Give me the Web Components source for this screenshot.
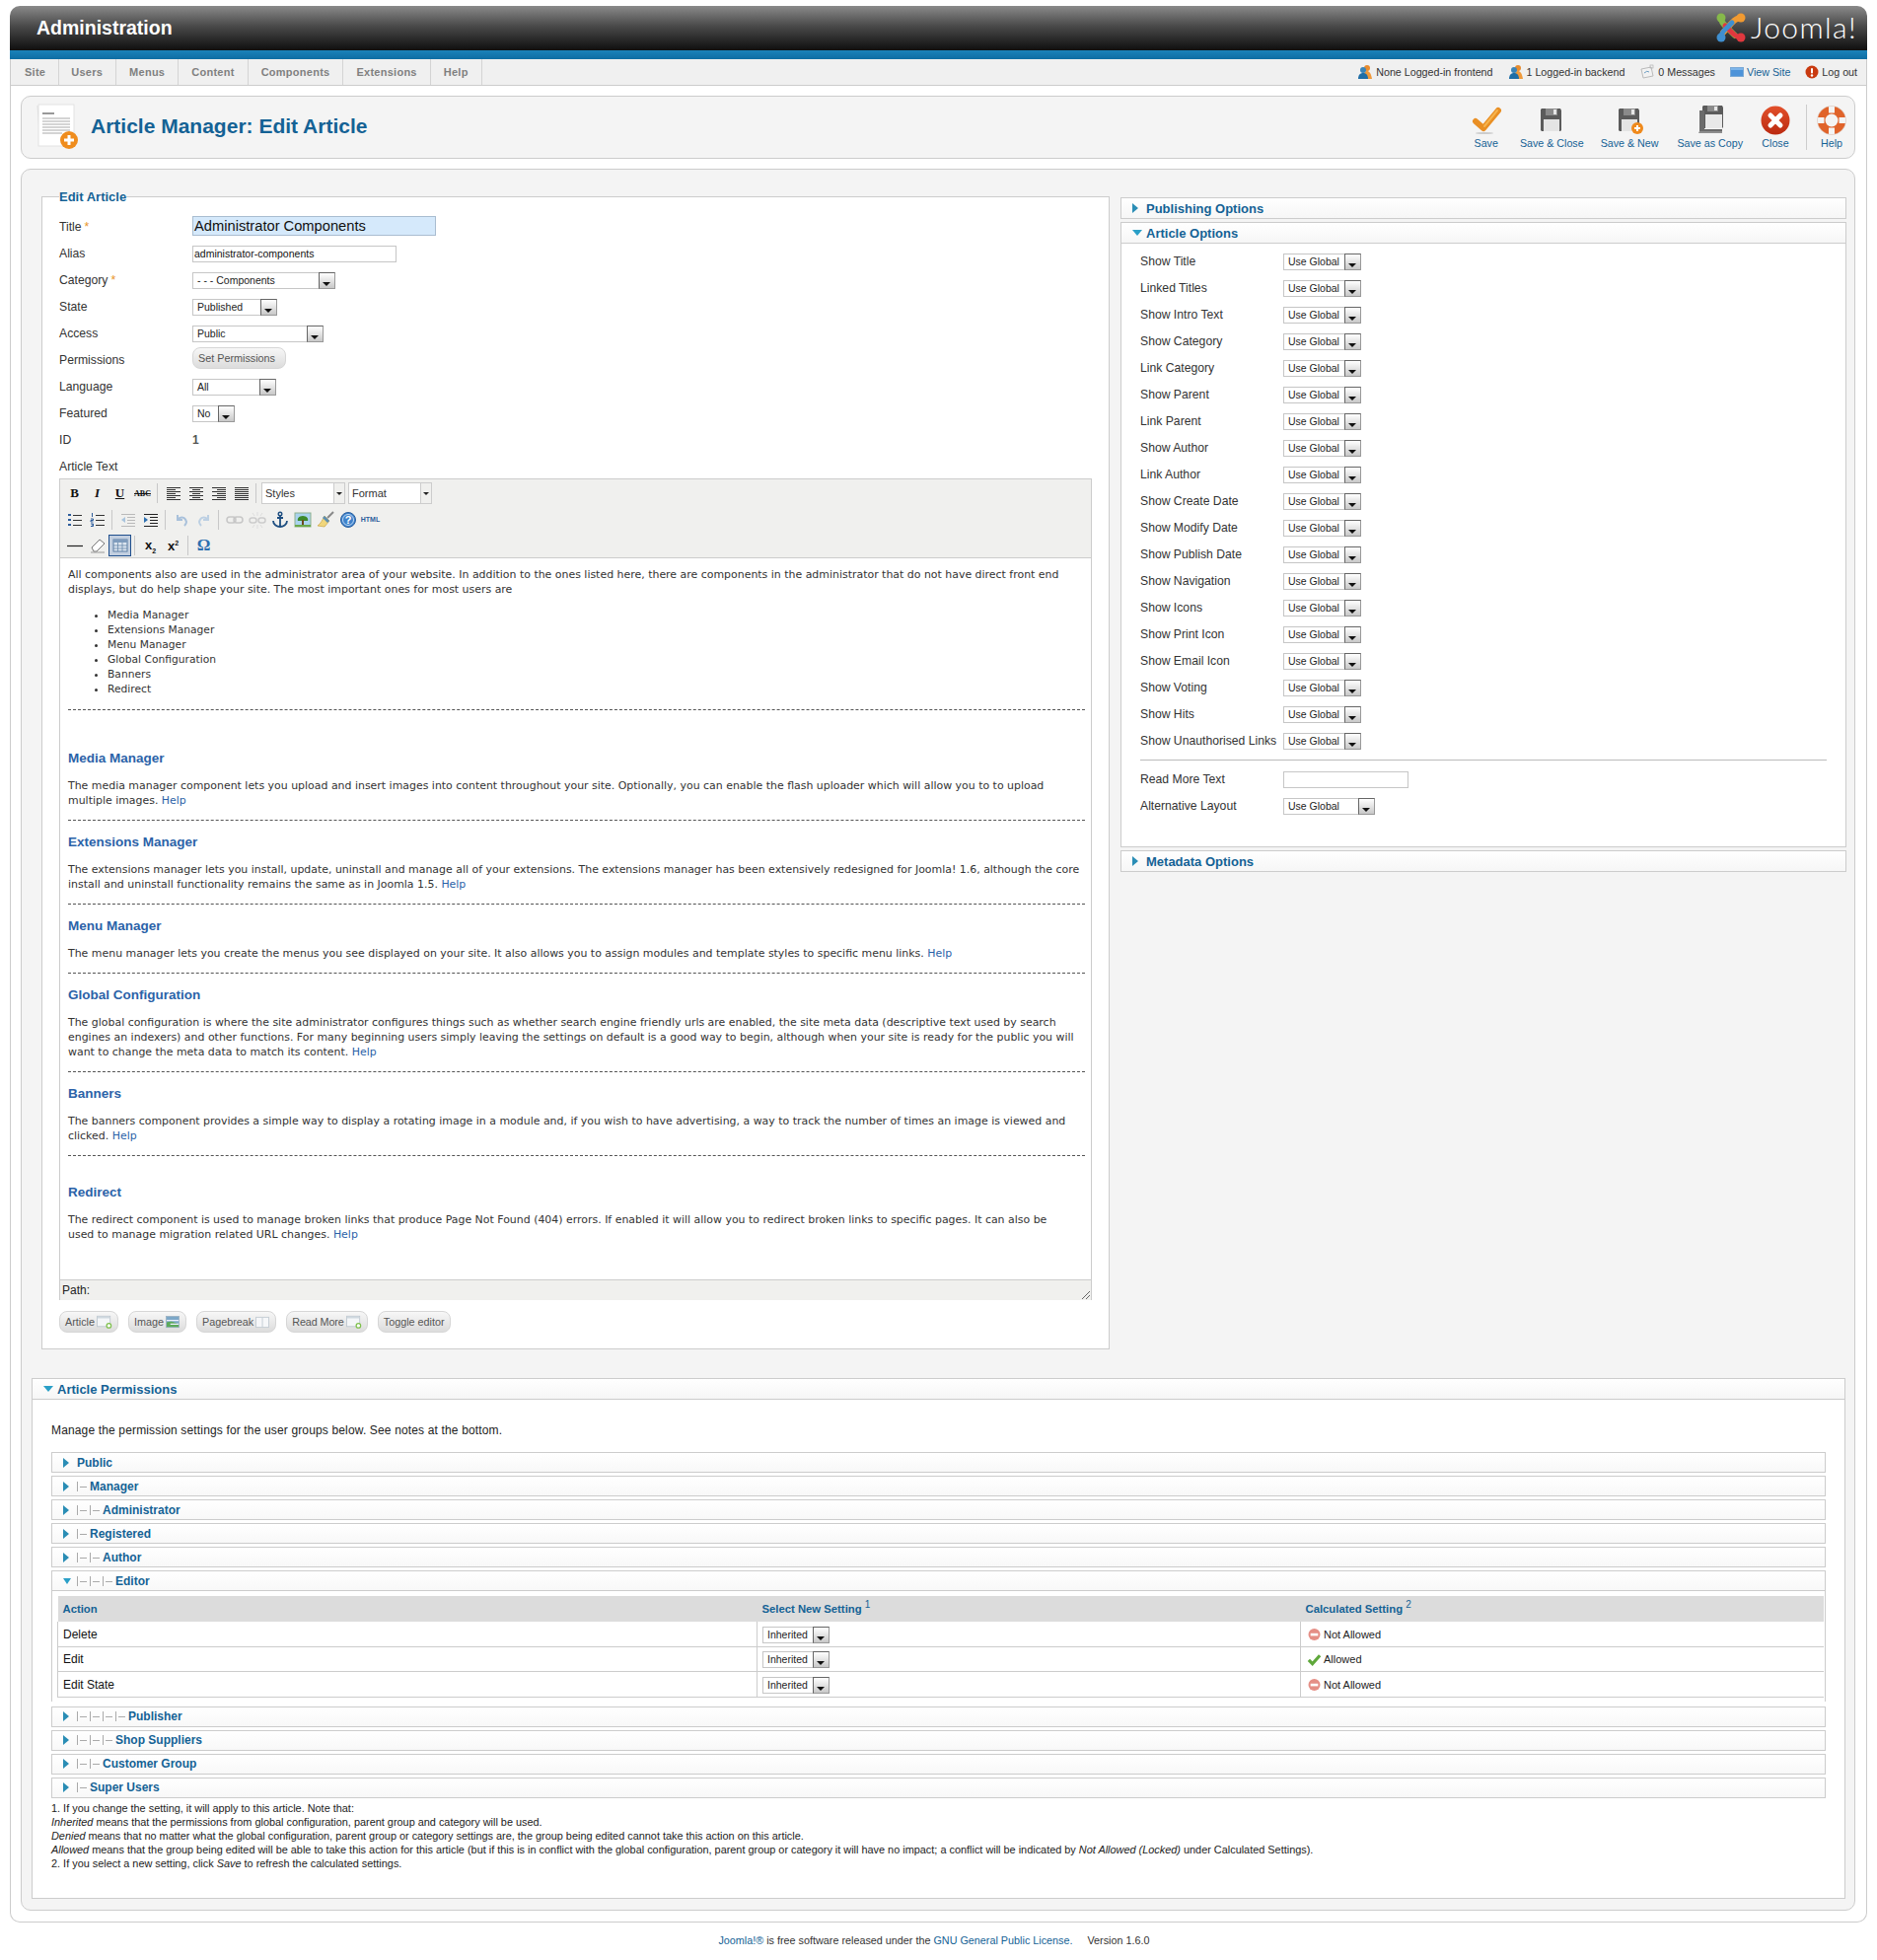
<!DOCTYPE html>
<html lang="en">
<head>
<meta charset="utf-8">
<title>Administration - Edit Article</title>
<style>
  html, body { margin: 0; background: #fff; }
  body { font-family: "Liberation Sans", Arial, sans-serif; color: #333; }
  rich-editor a { color: #2b62a8; }
</style>
</head>
<body>
<admin-page>
  <admin-header heading="Administration"></admin-header>
  <admin-frame>
    <admin-menu></admin-menu>
    <title-bar heading="Article Manager: Edit Article">
      <tool-button label="Save" icon="save" style="padding-right:9.7px"></tool-button>
      <tool-button label="Save &amp; Close" icon="floppy"></tool-button>
      <tool-button label="Save &amp; New" icon="floppyNew"></tool-button>
      <tool-button label="Save as Copy" icon="floppyCopy" style="padding-left:10.5px"></tool-button>
      <tool-button label="Close" icon="close"></tool-button>
      <tool-button label="Help" icon="help" divider></tool-button>
    </title-bar>
    <content-box>
      <edit-fieldset slot="left" legend="Edit Article">
        <form-row label="Title" required><text-input value="Administrator Components" variant="title" width="247"></text-input></form-row>
        <form-row label="Alias"><text-input value="administrator-components" width="207"></text-input></form-row>
        <form-row label="Category" required><fake-select value="- - - Components" width="145"></fake-select></form-row>
        <form-row label="State"><fake-select value="Published" width="86"></fake-select></form-row>
        <form-row label="Access"><fake-select value="Public" width="133"></fake-select></form-row>
        <form-row label="Permissions"><soft-button wide>Set Permissions</soft-button></form-row>
        <form-row label="Language"><fake-select value="All" width="85"></fake-select></form-row>
        <form-row label="Featured"><fake-select value="No" width="43"></fake-select></form-row>
        <form-row label="ID"><b style="color:#555;font-size:12px">1</b></form-row>
        <form-row label="Article Text"></form-row>
        <rich-editor>
          <p>All components also are used in the administrator area of your website. In addition to the ones listed here, there are components in the administrator that do not have direct front end<br>displays, but do help shape your site. The most important ones for most users are</p>
          <ul><li>Media Manager</li><li>Extensions Manager</li><li>Menu Manager</li><li>Global Configuration</li><li>Banners</li><li>Redirect</li></ul>
          <hr>
          <h3 class="far">Media Manager</h3>
          <p>The media manager component lets you upload and insert images into content throughout your site. Optionally, you can enable the flash uploader which will allow you to to upload<br>multiple images. <a>Help</a></p>
          <hr>
          <h3>Extensions Manager</h3>
          <p>The extensions manager lets you install, update, uninstall and manage all of your extensions. The extensions manager has been extensively redesigned for Joomla! 1.6, although the core<br>install and uninstall functionality remains the same as in Joomla 1.5. <a>Help</a></p>
          <hr>
          <h3>Menu Manager</h3>
          <p>The menu manager lets you create the menus you see displayed on your site. It also allows you to assign modules and template styles to specific menu links. <a>Help</a></p>
          <hr>
          <h3>Global Configuration</h3>
          <p>The global configuration is where the site administrator configures things such as whether search engine friendly urls are enabled, the site meta data (descriptive text used by search<br>engines an indexers) and other functions. For many beginning users simply leaving the settings on default is a good way to begin, although when your site is ready for the public you will<br>want to change the meta data to match its content. <a>Help</a></p>
          <hr>
          <h3>Banners</h3>
          <p>The banners component provides a simple way to display a rotating image in a module and, if you wish to have advertising, a way to track the number of times an image is viewed and<br>clicked. <a>Help</a></p>
          <hr>
          <h3 class="mid">Redirect</h3>
          <p>The redirect component is used to manage broken links that produce Page Not Found (404) errors. If enabled it will allow you to redirect broken links to specific pages. It can also be<br>used to manage migration related URL changes. <a>Help</a></p>
        </rich-editor>
        <editor-buttons>
          <soft-button icon="btnArticle">Article</soft-button>
          <soft-button icon="btnImage">Image</soft-button>
          <soft-button icon="btnBreak">Pagebreak</soft-button>
          <soft-button icon="btnArticle" style="letter-spacing:-.1px">Read More</soft-button>
          <soft-button>Toggle editor</soft-button>
        </editor-buttons>
      </edit-fieldset>

      <option-panel slot="right" heading="Publishing Options"></option-panel>
      <option-panel slot="right" heading="Article Options" open>
        <article-options></article-options>
      </option-panel>
      <option-panel slot="right" heading="Metadata Options"></option-panel>

      <option-panel slot="bottom" heading="Article Permissions" open>
        <permission-list></permission-list>
      </option-panel>
    </content-box>
  </admin-frame>
  <admin-footer></admin-footer>
</admin-page>

<script>
const lines = (rows) => rows.map(([x, y, w]) => `M${x} ${y + 0.5}h${w}`).join("");

const ICONS = {
  save: `<svg viewBox="0 0 32 32" width="32" height="32"><ellipse cx="14" cy="29" rx="9" ry="1" fill="#ccc"/><path d="M5 17l8 7L28 6" fill="none" stroke="#e98f24" stroke-width="6" stroke-linecap="round" stroke-linejoin="round"/><path d="M14 22L27 6" stroke="#f6b44e" stroke-width="2" stroke-linecap="round"/></svg>`,
  floppy: `<svg viewBox="0 0 32 32" width="32" height="32"><path d="M6 4h19l1 2v20l-1 1H6l-1-1V5z" fill="#5b5b5b"/><rect x="10" y="4" width="12" height="7" fill="#8a8a8a"/><rect x="18" y="5" width="3" height="5" fill="#e6e6e6"/><rect x="8" y="15" width="16" height="12" fill="#e4e4e4"/></svg>`,
  floppyNew: `<svg viewBox="0 0 32 32" width="32" height="32"><path d="M6 4h19l1 2v20l-1 1H6l-1-1V5z" fill="#5b5b5b"/><rect x="10" y="4" width="12" height="7" fill="#8a8a8a"/><rect x="18" y="5" width="3" height="5" fill="#e6e6e6"/><rect x="8" y="15" width="16" height="12" fill="#e4e4e4"/><circle cx="24" cy="24" r="6" fill="#ef8a1d"/><path d="M24 21v6M21 24h6" stroke="#fff" stroke-width="2"/></svg>`,
  floppyCopy: `<svg viewBox="0 0 32 32" width="32" height="32"><path d="M9 1h19l1 2v20l-1 1H9l-1-1V2z" fill="#5b5b5b"/><rect x="13" y="1" width="11" height="6" fill="#8a8a8a"/><rect x="20" y="2" width="3" height="4" fill="#e6e6e6"/><path d="M5 6h5v19h18v3H5z" fill="#6b6b6b"/><path d="M5 27h23v2H4z" fill="#8d8d8d"/><rect x="11" y="10" width="17" height="14" fill="#e8e8e8"/></svg>`,
  close: `<svg viewBox="0 0 32 32" width="32" height="32"><defs><linearGradient id="r" x1="0" y1="0" x2="0" y2="1"><stop offset="0" stop-color="#e2502b"/><stop offset="1" stop-color="#bb2a10"/></linearGradient></defs><circle cx="16" cy="16" r="14.5" fill="url(#r)"/><path d="M11 11l10 10M21 11L11 21" stroke="#fff" stroke-width="5" stroke-linecap="round"/></svg>`,
  help: `<svg viewBox="0 0 32 32" width="32" height="32"><circle cx="16" cy="16" r="10.5" fill="none" stroke="#e0632a" stroke-width="8"/><path d="M16 1.500v7M16 23.500v7M1.500 16h7M23.500 16h7" stroke="#f4f4f4" stroke-width="6"/><circle cx="16" cy="16" r="14.500" fill="none" stroke="#d9d9d9" stroke-width=".5"/></svg>`,

  person: `<svg viewBox="0 0 16 16" width="16" height="16"><circle cx="10" cy="4" r="3" fill="#e78b2e"/><path d="M6 15c0-6 2-8 4-8s4 2 5 8z" fill="#ef9a3c"/><circle cx="6" cy="6" r="3" fill="#3a84b8"/><path d="M1 15c0-4 2-6 5-6s5 2 5 6z" fill="#1f6ea6"/></svg>`,
  message: `<svg viewBox="0 0 16 16" width="16" height="16"><path d="M2 5l10-2 2 9-10 2z" fill="#f2f2f2" stroke="#bbb"/><path d="M5 9q3-3 5-1" stroke="#6d9ec4" fill="none"/><rect x="11" y="1" width="3" height="3" fill="none" stroke="#aaa" stroke-width=".6"/></svg>`,
  window: `<svg viewBox="0 0 14 12" width="14" height="12"><rect x=".5" y="1.500" width="13" height="9" fill="#4d93d9" stroke="#7aa9d6"/><rect x="1" y="2" width="12" height="2" fill="#7cb5ea"/></svg>`,
  logout: `<svg viewBox="0 0 14 14" width="14" height="14"><circle cx="7" cy="7" r="6.500" fill="#c93a10"/><rect x="6" y="3" width="2" height="5.500" rx="1" fill="#fff"/><circle cx="7" cy="10.500" r="1.200" fill="#fff"/></svg>`,

  notAllowed: `<svg viewBox="0 0 14 14" width="14" height="14"><circle cx="7" cy="7" r="6" fill="#e58f86"/><rect x="3.200" y="5.800" width="7.600" height="2.600" fill="#fff"/></svg>`,
  allowed: `<svg viewBox="0 0 16 14" width="16" height="14"><path d="M2 8l4 4 8-9" fill="none" stroke="#5fa83b" stroke-width="3.400"/></svg>`,

  btnArticle: `<svg viewBox="0 0 18 16" width="16" height="14"><rect x=".5" y="1.500" width="15" height="12" fill="#f4f6f8" stroke="#bcc6cf"/><rect x="1" y="2" width="14" height="2" fill="#cfd8df"/><circle cx="14" cy="12.500" r="2.600" fill="#fff" stroke="#7ec04b" stroke-width="1.400"/></svg>`,
  btnImage: `<svg viewBox="0 0 16 14" width="15" height="13"><rect x=".5" y=".5" width="14" height="12" fill="#7da8c8" stroke="#9eb4c4"/><path d="M1 7l5-1 8 3v3H1z" fill="#5caa5b"/><path d="M1 5h13M5 9h9" stroke="#eef" stroke-width="1.400"/></svg>`,
  btnBreak: `<svg viewBox="0 0 16 14" width="15" height="13"><rect x=".5" y="1.500" width="14" height="11" fill="#f6f7f9" stroke="#c4ccd3"/><path d="M7.500 2v10" stroke="#c4ccd3"/></svg>`,

  alignLeft: `<svg viewBox="0 0 20 20" width="20" height="20"><path d="${lines([[3,4,14],[3,6,9],[3,8,14],[3,10,9],[3,12,14],[3,14,9],[3,16,14]])}" stroke="#333" fill="none"/></svg>`,
  alignCenter: `<svg viewBox="0 0 20 20" width="20" height="20"><path d="${lines([[3,4,14],[6,6,8],[3,8,14],[6,10,8],[3,12,14],[6,14,8],[3,16,14]])}" stroke="#333" fill="none"/></svg>`,
  alignRight: `<svg viewBox="0 0 20 20" width="20" height="20"><path d="${lines([[3,4,14],[8,6,9],[3,8,14],[8,10,9],[3,12,14],[8,14,9],[3,16,14]])}" stroke="#333" fill="none"/></svg>`,
  alignFull: `<svg viewBox="0 0 20 20" width="20" height="20"><path d="${lines([[3,4,14],[3,6,14],[3,8,14],[3,10,14],[3,12,14],[3,14,14],[3,16,14]])}" stroke="#333" fill="none"/></svg>`,
  bullets: `<svg viewBox="0 0 20 20" width="20" height="20"><path d="${lines([[8,5,9],[8,10,9],[8,15,9]])}" stroke="#333" fill="none"/><path d="M3 4h3v2H3zM3 9h3v2H3zM3 14h3v2H3z" fill="#2d5d9c"/></svg>`,
  numbers: `<svg viewBox="0 0 20 20" width="20" height="20"><path d="${lines([[8,5,9],[8,10,9],[8,15,9]])}" stroke="#333" fill="none"/><path d="M4.500 3v4M3 9h2.500v1.500H3V12h2.500M3 14h2.500v1H4M5.500 15v1.500H3" stroke="#2d5d9c" fill="none"/></svg>`,
  outdent: `<svg viewBox="0 0 20 20" width="20" height="20"><path d="${lines([[3,4,14],[9,7,8],[9,10,8],[9,13,8],[3,16,14]])}" stroke="#b9b9b9" fill="none"/><path d="M7 7v6l-4-3z" fill="#a9c4dd"/></svg>`,
  indent: `<svg viewBox="0 0 20 20" width="20" height="20"><path d="${lines([[3,4,14],[9,7,8],[9,10,8],[9,13,8],[3,16,14]])}" stroke="#222" fill="none"/><path d="M3 7v6l4-3z" fill="#2d6fb0"/></svg>`,
  undo: `<svg viewBox="0 0 20 20" width="20" height="20"><path d="M6 5v5h5M6 10c3-4 8-3 9 2 0 2-1 3-2 4" fill="none" stroke="#a9c1db" stroke-width="2"/></svg>`,
  redo: `<svg viewBox="0 0 20 20" width="20" height="20"><path d="M14 5v5H9M14 10c-3-4-8-3-9 2 0 2 1 3 2 4" fill="none" stroke="#bdd0e3" stroke-width="2"/></svg>`,
  link: `<svg viewBox="0 0 20 20" width="20" height="20"><rect x="2" y="7" width="9" height="6" rx="3" fill="none" stroke="#c7c7c7" stroke-width="1.500"/><rect x="9" y="7" width="9" height="6" rx="3" fill="none" stroke="#c7c7c7" stroke-width="1.500"/></svg>`,
  unlink: `<svg viewBox="0 0 20 20" width="20" height="20"><rect x="2" y="8" width="7" height="5" rx="2.500" fill="none" stroke="#ccc" stroke-width="1.500"/><rect x="11" y="8" width="7" height="5" rx="2.500" fill="none" stroke="#ccc" stroke-width="1.500"/><path d="M10 2v4M10 15v4M5 3l2 3M15 3l-2 3M5 18l2-3M15 18l-2-3" stroke="#ddd"/></svg>`,
  anchor: `<svg viewBox="0 0 20 20" width="20" height="20"><circle cx="10" cy="4" r="1.800" fill="none" stroke="#1e4e80" stroke-width="1.400"/><path d="M10 6v11M7 8h6M3 11c0 4 4 6 7 6s7-2 7-6" fill="none" stroke="#1e4e80" stroke-width="1.800"/></svg>`,
  image: `<svg viewBox="0 0 20 20" width="20" height="20"><rect x="2" y="3" width="16" height="14" fill="#a9d3ee" stroke="#8db08d"/><path d="M2 15h16v2H2z" fill="#6aa84a"/><path d="M10 6c-4 0-6 3-5 5h10c1-2-1-5-5-5z" fill="#3c8a2b"/><rect x="9" y="10" width="2" height="5" fill="#6d4a20"/></svg>`,
  cleanup: `<svg viewBox="0 0 20 20" width="20" height="20"><path d="M12 8L18 2" stroke="#888" stroke-width="2"/><path d="M9 6l5 5-5 6-7-1c3-2 5-6 7-10z" fill="#f0d67c" stroke="#c9a545" stroke-width=".7"/><path d="M9 6l5 5-2 2-5-5z" fill="#5d8fb3"/></svg>`,
  helpRound: `<svg viewBox="0 0 20 20" width="20" height="20"><circle cx="10" cy="10" r="7.500" fill="#3f82cb" stroke="#2a5f9e"/><circle cx="10" cy="10" r="5.500" fill="none" stroke="#bcd7f2"/><text x="10" y="14" font-size="11" font-weight="bold" text-anchor="middle" fill="#fff" font-family="Liberation Sans">?</text></svg>`,
  hr: `<svg viewBox="0 0 20 20" width="20" height="20"><path d="M2 10.500h16" stroke="#222" stroke-width="1.200"/></svg>`,
  eraser: `<svg viewBox="0 0 20 20" width="20" height="20"><path d="M4 12l8-8 5 4-8 8H6z" fill="#fff" stroke="#777"/><path d="M3 17h14" stroke="#999"/></svg>`,
  table: `<svg viewBox="0 0 20 20" width="20" height="20"><rect x="3" y="4" width="14" height="12" fill="#dbe4ef" stroke="#5d7fa3"/><rect x="3" y="4" width="14" height="3" fill="#7f9cbd"/><path d="M3 10h14M3 13h14M7.500 7v9M12 7v9" stroke="#5d7fa3" stroke-width=".7"/></svg>`
};

class AdminPage extends HTMLElement {
  constructor() {
    super();
    this.attachShadow({ mode: "open" });
    this.shadowRoot.innerHTML = /* html */`
      <style>:host { display: block; padding: 6px 10px 0; height: 1981px; }</style>
      <slot></slot>`;
  }
}

class AdminHeader extends HTMLElement {
  constructor() {
    super();
    this.attachShadow({ mode: "open" });
  }

  connectedCallback() {
    this.shadowRoot.innerHTML = /* html */`
    <style>
      :host { display: block; }
      .bar {
        height: 45px;
        display: flex;
        align-items: center;
        justify-content: space-between;
        padding: 0 10px 0 27px;
        background: linear-gradient(#8a8a8a, #4a4a4a 45%, #0f0f0f);
        border-radius: 10px 10px 0 0;
      }
      h1 { margin: 0 0 1px; font: bold 19.5px "Liberation Sans", sans-serif; color: #fff; }
      .logo { display: flex; align-items: center; gap: 5px; margin-bottom: 1px; }
      .word { font: 300 30px Lato, sans-serif; color: #fff; letter-spacing: 1.4px; line-height: 30px; margin-top: -2px; }
      .blue { height: 9px; background: linear-gradient(#1b82b9, #0e6da3); }
    </style>
    <div class="bar">
      <h1>${this.getAttribute("heading")}</h1>
      <div class="logo">
        <svg viewBox="0 0 30 30" width="30" height="30">
          <g fill="none" stroke-width="6" stroke-linecap="round">
            <path d="M5 5c0 5 3 7 6 10l8 8" stroke="#86b94a"/>
            <path d="M25 5c-5 0-7 3-10 6l-8 9" stroke="#f19a31"/>
            <path d="M25 25c-5 0-7-3-10-6l-6-6" stroke="#e0383e" stroke-width="5"/>
            <path d="M5 25c0-5 3-7 6-10l5-5" stroke="#3f8fd0" stroke-width="5"/>
          </g>
          <circle cx="5" cy="5" r="4.500" fill="#86b94a"/><circle cx="25" cy="5" r="4.500" fill="#f19a31"/>
          <circle cx="25" cy="25" r="4.500" fill="#e0383e"/><circle cx="5" cy="25" r="4.500" fill="#3f8fd0"/>
        </svg>
        <span class="word">Joomla!</span>
      </div>
    </div>
    <div class="blue"></div>`;
  }
}

class AdminFrame extends HTMLElement {
  constructor() {
    super();
    this.attachShadow({ mode: "open" });
    this.shadowRoot.innerHTML = /* html */`
      <style>
        :host {
          display: block;
          border: 1px solid #ccc;
          border-top: 0;
          border-radius: 0 0 10px 10px;
          padding-bottom: 11px;
        }
      </style>
      <slot></slot>`;
  }
}

class AdminMenu extends HTMLElement {
  constructor() {
    super();
    this.attachShadow({ mode: "open" });
  }

  connectedCallback() {
    const items = ["Site", "Users", "Menus", "Content", "Components", "Extensions", "Help"];
    this.shadowRoot.innerHTML = /* html */`
    <style>
      :host {
        display: flex;
        justify-content: space-between;
        height: 26px;
        background: #f0f0f0;
        border-bottom: 1px solid #ccc;
        font: 11px/26px "Liberation Sans", sans-serif;
      }
      nav { display: flex; }
      nav a {
        padding: 0 13px;
        border-right: 1px solid #d4d4d4;
        color: #808080;
        font-weight: bold;
        letter-spacing: .26px;
      }
      nav a:first-child { padding-left: 14px; }
      nav a:nth-child(2) { padding-left: 12px; }
      .status { display: flex; align-items: center; padding-right: 9px; color: #333; font-size: 10.7px; }
      .status span { display: flex; align-items: center; gap: 3px; margin-left: 15px; }
      .status .view { color: #146295; }
    </style>
    <nav>${items.map((item) => `<a>${item}</a>`).join("")}</nav>
    <div class="status">
      <span>${ICONS.person}None Logged-in frontend</span>
      <span>${ICONS.person}1 Logged-in backend</span>
      <span>${ICONS.message}0 Messages</span>
      <span class="view">${ICONS.window}View Site</span>
      <span>${ICONS.logout}Log out</span>
    </div>`;
  }
}

class TitleBar extends HTMLElement {
  constructor() {
    super();
    this.attachShadow({ mode: "open" });
  }

  connectedCallback() {
    this.shadowRoot.innerHTML = /* html */`
    <style>
      :host {
        display: flex;
        align-items: center;
        justify-content: space-between;
        height: 62px;
        margin: 10px 11px 10px 10px;
        background: #f4f4f4;
        border: 1px solid #ccc;
        border-radius: 10px;
      }
      .left { display: flex; align-items: center; gap: 11px; padding-left: 11px; }
      h2 { margin: 0 0 2px; font: bold 21px "Liberation Sans", sans-serif; color: #146295; }
      .tools { display: flex; align-items: stretch; padding-right: 7px; }
    </style>
    <div class="left">
      <svg viewBox="0 0 48 48" width="48" height="48">
        <path d="M5 2l3 41" stroke="#ddd" fill="none"/>
        <rect x="6" y="1" width="36" height="42" fill="#fff" stroke="#e2e2e2"/>
        <path d="M10 10h12" stroke="#999" stroke-width="2"/>
        <path d="M10 15h28M10 18h28M10 21h28M10 24h28M10 27h28M10 30h20" stroke="#aaa"/>
        <circle cx="37" cy="37" r="9" fill="#ef8c1d"/>
        <path d="M37 32v10M32 37h10" stroke="#fff" stroke-width="3"/>
      </svg>
      <h2>${this.getAttribute("heading")}</h2>
    </div>
    <div class="tools"><slot></slot></div>`;
  }
}

class ToolButton extends HTMLElement {
  constructor() {
    super();
    this.attachShadow({ mode: "open" });
  }

  connectedCallback() {
    this.shadowRoot.innerHTML = /* html */`
    <style>
      :host {
        display: flex;
        flex-direction: column;
        align-items: center;
        padding: 0 8.5px;
        font: 10.7px/14px "Liberation Sans", sans-serif;
        color: #146295;
      }
      :host([divider]) { margin-left: 6.5px; padding: 0 0 0 9px; border-left: 1px solid #ccc; }
      span { white-space: nowrap; }
    </style>
    ${ICONS[this.getAttribute("icon")]}
    <span>${this.getAttribute("label")}</span>`;
  }
}

class ContentBox extends HTMLElement {
  constructor() {
    super();
    this.attachShadow({ mode: "open" });
    this.shadowRoot.innerHTML = /* html */`
      <style>
        :host {
          display: block;
          height: 1745px;
          margin: 0 11px 0 10px;
          padding: 19px 9px 0 10px;
          background: #f4f4f4;
          border: 1px solid #ccc;
          border-radius: 10px;
        }
        .columns { display: grid; grid-template-columns: 1083px 736px; gap: 11px; margin-left: 10px; }
        .right { display: flex; flex-direction: column; gap: 3px; padding-top: 9px; }
        .bottom { margin-top: 29px; }
      </style>
      <div class="columns">
        <div><slot name="left"></slot></div>
        <div class="right"><slot name="right"></slot></div>
      </div>
      <div class="bottom"><slot name="bottom"></slot></div>`;
  }
}

class EditFieldset extends HTMLElement {
  constructor() {
    super();
    this.attachShadow({ mode: "open" });
  }

  connectedCallback() {
    this.shadowRoot.innerHTML = /* html */`
    <style>
      :host { display: block; }
      fieldset {
        margin: 0;
        min-width: 0;
        padding: 9px 17px 17px 17px;
        background: #fff;
        border: 1px solid #ccc;
        height: 1177px;
        box-sizing: border-box;
      }
      legend { padding: 0; font: bold 13px/16px "Liberation Sans", sans-serif; color: #146295; }
      legend span { position: relative; top: 1px; }
    </style>
    <fieldset>
      <legend><span>${this.getAttribute("legend")}</span></legend>
      <slot></slot>
    </fieldset>`;
  }
}

class FormRow extends HTMLElement {
  constructor() {
    super();
    this.attachShadow({ mode: "open" });
  }

  connectedCallback() {
    const star = this.hasAttribute("required") ? `<i>*</i>` : "";
    this.shadowRoot.innerHTML = /* html */`
    <style>
      :host {
        display: grid;
        grid-template-columns: 135px 1fr;
        align-items: center;
        height: 27px;
        font: 12.2px "Liberation Sans", sans-serif;
        color: #333;
      }
      i { font-style: normal; color: #e9962d; margin-left: 3px; }
      .control { display: flex; align-items: center; }
    </style>
    <div>${this.getAttribute("label")}${star}</div>
    <div class="control"><slot></slot></div>`;
  }
}

class TextInput extends HTMLElement {
  constructor() {
    super();
    this.attachShadow({ mode: "open" });
  }

  connectedCallback() {
    const title = this.getAttribute("variant") === "title";
    this.shadowRoot.innerHTML = /* html */`
    <style>
      :host {
        display: block;
        box-sizing: border-box;
        width: ${this.getAttribute("width")}px;
        height: ${title ? 20 : 17}px;
        margin-top: ${title ? -2 : 1}px;
        padding-left: 1px;
        background: ${title ? "#d5e9fb" : "#fff"};
        border: 1px solid ${title ? "#a9bdd0" : "#c6c6c6"};
        font: ${title ? "14.7px/18px" : "10.5px/15px"} "Liberation Sans", sans-serif;
        color: #111;
        white-space: nowrap;
      }
    </style>${this.getAttribute("value") || ""}`;
  }
}

class FakeSelect extends HTMLElement {
  constructor() {
    super();
    this.attachShadow({ mode: "open" });
  }

  connectedCallback() {
    this.shadowRoot.innerHTML = /* html */`
    <style>
      :host {
        display: flex;
        box-sizing: border-box;
        width: ${this.getAttribute("width")}px;
        height: 17px;
        margin-top: 1px;
        background: #fff;
        border: 1px solid #c6c6c6;
        font: 10.5px/15px "Liberation Sans", sans-serif;
        color: #222;
      }
      .value { flex: 1; padding-left: 4px; white-space: nowrap; overflow: hidden; }
      .arrow {
        position: relative;
        box-sizing: border-box;
        flex: 0 0 17px;
        margin: -1px -1px -1px 0;
        background: linear-gradient(#fff, #c8c8c8);
        border: 1px solid #666;
        border-right-color: #999;
        border-bottom-color: #999;
      }
      .arrow::after {
        content: "";
        position: absolute;
        left: 3px;
        bottom: 2px;
        border: 4px solid transparent;
        border-top: 4px solid #111;
        border-bottom: 0;
      }
    </style>
    <div class="value">${this.getAttribute("value")}</div>
    <div class="arrow"></div>`;
  }
}

class SoftButton extends HTMLElement {
  constructor() {
    super();
    this.attachShadow({ mode: "open" });
  }

  connectedCallback() {
    const icon = ICONS[this.getAttribute("icon")] || "";
    this.shadowRoot.innerHTML = /* html */`
    <style>
      :host {
        display: inline-flex;
        align-items: center;
        gap: 2px;
        box-sizing: border-box;
        height: 22px;
        margin-top: -3px;
        padding: 0 5px;
        background: linear-gradient(#f7f7f7, #dcdcdc);
        border: 1px solid #d6d6d6;
        border-radius: 8px;
        font: 10.8px "Liberation Sans", sans-serif;
        color: #555;
        white-space: nowrap;
      }
      :host([wide]) { padding-right: 10px; }
    </style>
    <slot></slot>${icon}`;
  }
}

class EditorButtons extends HTMLElement {
  constructor() {
    super();
    this.attachShadow({ mode: "open" });
    this.shadowRoot.innerHTML = /* html */`
      <style>:host { display: flex; gap: 10px; margin-top: 14px; }</style>
      <slot></slot>`;
  }
}

class RichEditor extends HTMLElement {
  constructor() {
    super();
    this.attachShadow({ mode: "open" });
  }

  connectedCallback() {
    const b = (name) => `<span class="btn">${ICONS[name]}</span>`;
    const sep = `<span class="sep"></span>`;
    this.shadowRoot.innerHTML = /* html */`
    <style>
      :host {
        display: block;
        box-sizing: border-box;
        height: 833px;
        margin-top: -1px;
        border: 1px solid #ccc;
        background: #fff;
      }
      .toolbar { box-sizing: border-box; height: 80px; padding: 1px 3px 0; background: #f0f0ee; border-bottom: 1px solid #ccc; }
      .row { display: flex; align-items: center; height: 26.5px; }
      .btn {
        display: flex; align-items: center; justify-content: center;
        flex: 0 0 23px; height: 22px; box-sizing: border-box;
        font-family: "Liberation Serif", serif;
        color: #111;
      }
      .btn.active { background: #c2cfe0; border: 1px solid #1f4e8c; }
      .sep { flex: 0 0 1px; height: 20px; margin: 0 4px 0 3px; background: #c8c8c8; }
      .list {
        display: flex; justify-content: space-between; align-items: center;
        box-sizing: border-box;
        width: 85px; height: 22px; margin: 0 2px 0 1px;
        padding-left: 3px;
        background: #fff;
        border: 1px solid #ccc;
        font: 11px "Liberation Sans", sans-serif;
        color: #333;
      }
      .list u { width: 10px; height: 20px; background: #f0f0ee; border-left: 1px solid #ccc; position: relative; }
      .list u::after {
        content: ""; position: absolute; left: 2px; top: 9px;
        border: 3px solid transparent; border-top: 3px solid #222; border-bottom: 0;
      }
      .body { box-sizing: border-box; height: 731px; padding: 9px 6px 0 8px; }
      ::slotted(p), ::slotted(ul) {
        margin: 0;
        font: 10.95px/15px "DejaVu Sans", Verdana, sans-serif;
        color: #333;
        white-space: nowrap;
      }
      ::slotted(p) { margin-top: 12px; }
      ::slotted(p:first-child) { margin-top: 0; }
      ::slotted(ul) { margin: 11px 0 13px; padding-left: 40px; font-size: 10.7px; }
      ::slotted(hr) { height: 0; margin: 12px 0 0; border: 0; border-top: 1px dashed #555; }
      ::slotted(h3) { margin: 14px 0 0; font: bold 13.5px/16px "Liberation Sans", sans-serif; color: #2b62a8; }
      ::slotted(h3.far) { margin-top: 41px; }
      ::slotted(h3.mid) { margin-top: 29px; }
      .path {
        position: relative;
        box-sizing: border-box;
        height: 21px;
        padding-left: 2px;
        background: #f0f0ee;
        border-top: 1px solid #ccc;
        font: 12px/21px "Liberation Sans", sans-serif;
        color: #222;
      }
      .path svg { position: absolute; right: 0; bottom: 0; }
    </style>
    <div class="toolbar">
      <div class="row">
        <span class="btn"><b style="font-size:13px">B</b></span>
        <span class="btn"><b style="font-size:13px"><i>I</i></b></span>
        <span class="btn"><b style="font-size:13px;text-decoration:underline;font-family:'Liberation Serif'">U</b></span>
        <span class="btn"><b style="font-size:8px;text-decoration:line-through">ABC</b></span>
        ${sep}${b("alignLeft")}${b("alignCenter")}${b("alignRight")}${b("alignFull")}${sep}
        <span class="list">Styles<u></u></span>
        <span class="list">Format<u></u></span>
      </div>
      <div class="row">
        ${b("bullets")}${b("numbers")}${sep}${b("outdent")}${b("indent")}${sep}${b("undo")}${b("redo")}${sep}
        ${b("link")}${b("unlink")}${b("anchor")}${b("image")}${b("cleanup")}${b("helpRound")}
        <span class="btn"><b style="font:bold 7px 'Liberation Sans';color:#2d5d9c">HTML</b></span>
      </div>
      <div class="row">
        ${b("hr")}${b("eraser")}<span class="btn active">${ICONS.table}</span>${sep}
        <span class="btn"><b style="font:bold 13px 'Liberation Sans'">x<sub style="font-size:7px">2</sub></b></span>
        <span class="btn"><b style="font:bold 13px 'Liberation Sans'">x<sup style="font-size:7px">2</sup></b></span>${sep}
        <span class="btn"><b style="font:bold 17px 'Liberation Serif';color:#2d6fb0">&#937;</b></span>
      </div>
    </div>
    <div class="body"><slot></slot></div>
    <div class="path">Path:
      <svg viewBox="0 0 10 10" width="10" height="10"><path d="M1 9l8-8M5 9l4-4" stroke="#666"/></svg>
    </div>`;
  }
}

class OptionPanel extends HTMLElement {
  constructor() {
    super();
    this.attachShadow({ mode: "open" });
  }

  connectedCallback() {
    const open = this.hasAttribute("open");
    this.shadowRoot.innerHTML = /* html */`
    <style>
      :host { display: block; background: #fff; border: 1px solid #ccc; }
      header {
        display: flex;
        align-items: center;
        height: 20px;
        padding-left: 11px;
        background: linear-gradient(#fff, #f6f6f6);
        ${open ? "border-bottom: 1px solid #ccc;" : ""}
        font: bold 13px "Liberation Sans", sans-serif;
        color: #146295;
      }
      .tri { width: 0; height: 0; box-sizing: border-box; }
      .closed { border: 5px solid transparent; border-left: 6px solid #2a8db5; border-right: 0; flex: 0 0 6px; margin-right: 8px; }
      .opened { border: 5px solid transparent; border-top: 6px solid #2a9fc7; border-bottom: 0; flex: 0 0 10px; margin-right: 4px; }
    </style>
    <header><span class="tri ${open ? "opened" : "closed"}"></span>${this.getAttribute("heading")}</header>
    <slot></slot>`;
  }
}

class ArticleOptions extends HTMLElement {
  constructor() {
    super();
    this.attachShadow({ mode: "open" });
  }

  connectedCallback() {
    const names = ["Show Title", "Linked Titles", "Show Intro Text", "Show Category", "Link Category",
      "Show Parent", "Link Parent", "Show Author", "Link Author", "Show Create Date", "Show Modify Date",
      "Show Publish Date", "Show Navigation", "Show Icons", "Show Print Icon", "Show Email Icon",
      "Show Voting", "Show Hits", "Show Unauthorised Links"];
    this.shadowRoot.innerHTML = /* html */`
    <style>
      :host { display: block; height: 611px; padding: 4px 19px 0; box-sizing: border-box; }
      .row {
        display: grid; grid-template-columns: 145px 1fr; align-items: center;
        height: 27px;
        font: 12.2px "Liberation Sans", sans-serif;
        color: #333;
        white-space: nowrap;
      }
      hr { height: 0; margin: 6px 0 5px; border: 0; border-top: 1px solid #bbb; }
    </style>
    ${names.map((name) => `<div class="row"><span>${name}</span><fake-select value="Use Global" width="79"></fake-select></div>`).join("")}
    <hr>
    <div class="row"><span>Read More Text</span><text-input width="127"></text-input></div>
    <div class="row"><span>Alternative Layout</span><fake-select value="Use Global" width="93"></fake-select></div>`;
  }
}

class PermGroup extends HTMLElement {
  constructor() {
    super();
    this.attachShadow({ mode: "open" });
  }

  connectedCallback() {
    const open = this.hasAttribute("open");
    const level = Number(this.getAttribute("level"));
    this.shadowRoot.innerHTML = /* html */`
    <style>
      :host { display: block; }
      header {
        display: flex;
        align-items: center;
        box-sizing: border-box;
        height: 21px;
        padding-left: 11px;
        background: linear-gradient(#fff, #f8f8f8);
        border: 1px solid #ccc;
        font: bold 12px "Liberation Sans", sans-serif;
        color: #146295;
      }
      .closed { border: 5px solid transparent; border-left: 6px solid #2a8db5; border-right: 0; margin-right: 8px; }
      .opened { border: 4px solid transparent; border-top: 6px solid #2a9fc7; border-bottom: 0; margin-right: 6px; }
      .tree { display: inline-block; flex: 0 0 13px; height: 10px; box-sizing: border-box; border-left: 1px solid #aaa;
        background: linear-gradient(#aaa, #aaa) 2px 5px / 7px 1px no-repeat; }
      .body { padding: 5px 1px 4px 5px; margin-bottom: 2px; border-left: 1px solid #ccc; border-right: 1px solid #ccc; }
    </style>
    <header><span class="${open ? "opened" : "closed"}"></span>${`<span class="tree"></span>`.repeat(level)}${this.getAttribute("name")}</header>
    ${open ? `<div class="body"><slot></slot></div>` : ""}`;
  }
}

class PermTable extends HTMLElement {
  constructor() {
    super();
    this.attachShadow({ mode: "open" });
  }

  connectedCallback() {
    const rows = [["Delete", false], ["Edit", true], ["Edit State", false]];
    this.shadowRoot.innerHTML = /* html */`
    <style>
      :host { display: block; }
      table { width: 100%; table-layout: fixed; border-collapse: collapse; font: 12px "Liberation Sans", sans-serif; color: #111; }
      th { height: 26px; padding: 0 5px; background: #dcdcdc; text-align: left; font-size: 11.3px; color: #146295; }
      sup { font-size: 10px; line-height: 0; font-weight: normal; }
      td { height: 23.6px; padding: 1px 5px 0; border: 1px solid #ccc; border-width: 0 1px 1px 1px; }
      td:last-child { border-right: 0; font-size: 11px; }
      td:last-child div { display: flex; align-items: center; gap: 2px; padding-left: 1px; color: #222; }
      td svg { width: 15px; }
    </style>
    <table>
      <colgroup><col style="width:709px"><col style="width:551px"><col></colgroup>
      <tr><th>Action</th><th>Select New Setting <sup>1</sup></th><th>Calculated Setting <sup>2</sup></th></tr>
      ${rows.map(([name, ok]) => `<tr>
        <td>${name}</td>
        <td><fake-select value="Inherited" width="68"></fake-select></td>
        <td><div>${ok ? ICONS.allowed : ICONS.notAllowed}${ok ? "Allowed" : "Not Allowed"}</div></td>
      </tr>`).join("")}
    </table>`;
  }
}

class PermissionList extends HTMLElement {
  constructor() {
    super();
    this.attachShadow({ mode: "open" });
  }

  connectedCallback() {
    const groups = [["Public", 0], ["Manager", 1], ["Administrator", 2], ["Registered", 1], ["Author", 2],
      ["Editor", 3, true], ["Publisher", 4], ["Shop Suppliers", 3], ["Customer Group", 2], ["Super Users", 1]];
    this.shadowRoot.innerHTML = /* html */`
    <style>
      :host { display: block; box-sizing: border-box; height: 505px; padding: 24px 19px 0; }
      p { margin: 0 0 14px; font: 12px/15px "Liberation Sans", sans-serif; color: #222; letter-spacing: .15px; }
      .groups { display: flex; flex-direction: column; gap: 3px; }
      .notes { margin-top: 3px; font: 10.9px/14px "Liberation Sans", sans-serif; color: #222; }
    </style>
    <p>Manage the permission settings for the user groups below. See notes at the bottom.</p>
    <div class="groups">
      ${groups.map(([name, level, open]) => `<perm-group name="${name}" level="${level}" ${open ? "open" : ""}>${open ? "<perm-table></perm-table>" : ""}</perm-group>`).join("")}
    </div>
    <div class="notes">
      1. If you change the setting, it will apply to this article. Note that:<br>
      <i>Inherited</i> means that the permissions from global configuration, parent group and category will be used.<br>
      <i>Denied</i> means that no matter what the global configuration, parent group or category settings are, the group being edited cannot take this action on this article.<br>
      <i>Allowed</i> means that the group being edited will be able to take this action for this article (but if this is in conflict with the global configuration, parent group or category it will have no impact; a conflict will be indicated by <i>Not Allowed (Locked)</i> under Calculated Settings).<br>
      2. If you select a new setting, click <i>Save</i> to refresh the calculated settings.
    </div>`;
  }
}

class AdminFooter extends HTMLElement {
  constructor() {
    super();
    this.attachShadow({ mode: "open" });
    this.shadowRoot.innerHTML = /* html */`
      <style>
        :host { display: block; padding: 11px 9px 0 0; text-align: center; font: 10.8px/14px "Liberation Sans", sans-serif; color: #333; }
        a { color: #146295; }
        span { margin-left: 15px; }
      </style>
      <a>Joomla!&reg;</a> is free software released under the <a>GNU General Public License.</a><span>Version 1.6.0</span>`;
  }
}

customElements.define("admin-page", AdminPage);
customElements.define("admin-header", AdminHeader);
customElements.define("admin-frame", AdminFrame);
customElements.define("admin-menu", AdminMenu);
customElements.define("title-bar", TitleBar);
customElements.define("tool-button", ToolButton);
customElements.define("content-box", ContentBox);
customElements.define("edit-fieldset", EditFieldset);
customElements.define("form-row", FormRow);
customElements.define("text-input", TextInput);
customElements.define("fake-select", FakeSelect);
customElements.define("soft-button", SoftButton);
customElements.define("editor-buttons", EditorButtons);
customElements.define("rich-editor", RichEditor);
customElements.define("option-panel", OptionPanel);
customElements.define("article-options", ArticleOptions);
customElements.define("perm-group", PermGroup);
customElements.define("perm-table", PermTable);
customElements.define("permission-list", PermissionList);
customElements.define("admin-footer", AdminFooter);
</script>
</body>
</html>
